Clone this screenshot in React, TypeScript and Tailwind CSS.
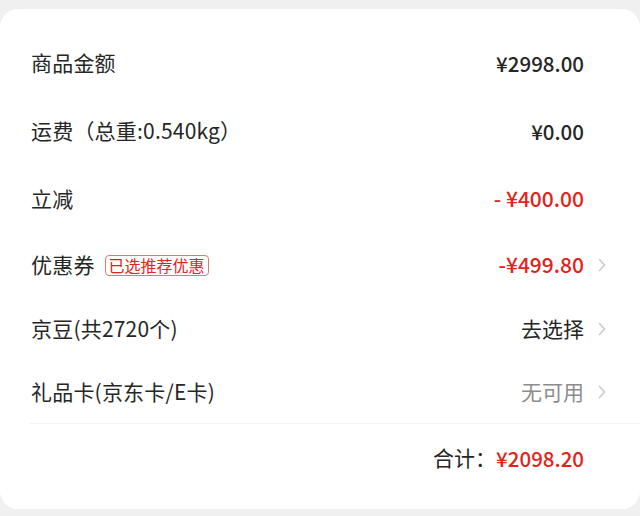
import React from 'react';

const font = { fontFamily: '"Noto Sans CJK SC", "Noto Sans", sans-serif' };

type Row = {
  label: string;
  badge?: string;
  value: string;
  tone: 'dark' | 'red' | 'gray';
  chevron?: boolean;
  h: string;
};

const rows: Row[] = [
  { label: '商品金额', value: '¥2998.00', tone: 'dark', h: 'h-[68px]' },
  { label: '运费（总重:0.540kg）', value: '¥0.00', tone: 'dark', h: 'h-[68px]' },
  { label: '立减', value: '- ¥400.00', tone: 'red', h: 'h-[68px]' },
  { label: '优惠券', badge: '已选推荐优惠', value: '-¥499.80', tone: 'red', chevron: true, h: 'h-[64px]' },
  { label: '京豆(共2720个)', value: '去选择', tone: 'dark', chevron: true, h: 'h-[63px]' },
  { label: '礼品卡(京东卡/E卡)', value: '无可用', tone: 'gray', chevron: true, h: 'h-[63px]' },
];

const Chevron = ({ show }: { show?: boolean }) => (
  <span className="w-[22px] flex justify-end">
    {show && (
      <svg width="8" height="14" viewBox="0 0 8 14" fill="none">
        <path d="M1.5 1.5 L6.5 7 L1.5 12.5" stroke="#c8c8c8" strokeWidth="1.5" strokeLinecap="round" strokeLinejoin="round" />
      </svg>
    )}
  </span>
);

export default function App() {
  return (
    <div className="w-[640px] h-[516px] bg-[#f0f0f0] pt-[9px] overflow-hidden" style={font}>
      <div className="bg-white rounded-[18px] pt-[20px] pb-[17px]">
        {rows.map((r) => (
          <div key={r.label} className={`${r.h} flex items-center justify-between pl-[31px] pr-[34px]`}>
            <div className="flex items-center gap-[10px]">
              <span className="text-[21px] tracking-[0.2px] text-[#262626]">{r.label}</span>
              {r.badge && (
                <span className="text-[16px] leading-[19px] text-[#e2231a] border border-[#d08070] rounded-[4px] px-[3px]">
                  {r.badge}
                </span>
              )}
            </div>
            <div className="flex items-center">
              <span
                className={
                  r.tone === 'red'
                    ? 'text-[21px] font-medium text-[#e2231a] whitespace-pre'
                    : r.tone === 'gray'
                    ? 'text-[21px] text-[#8c8c8c]'
                    : r.value.startsWith('¥')
                    ? 'text-[20.5px] font-medium text-[#262626]'
                    : 'text-[21px] text-[#262626]'
                }
              >
                {r.value}
              </span>
              <Chevron show={r.chevron} />
            </div>
          </div>
        ))}
        <div className="ml-[30px] border-t border-[#f2f2f2]" />
        <div className="h-[68px] flex items-center justify-end pr-[56px]">
          <span className="text-[21px] text-[#262626]">合计：</span>
          <span className="text-[20.5px] font-medium text-[#e2231a]">¥2098.20</span>
        </div>
      </div>
    </div>
  );
}
